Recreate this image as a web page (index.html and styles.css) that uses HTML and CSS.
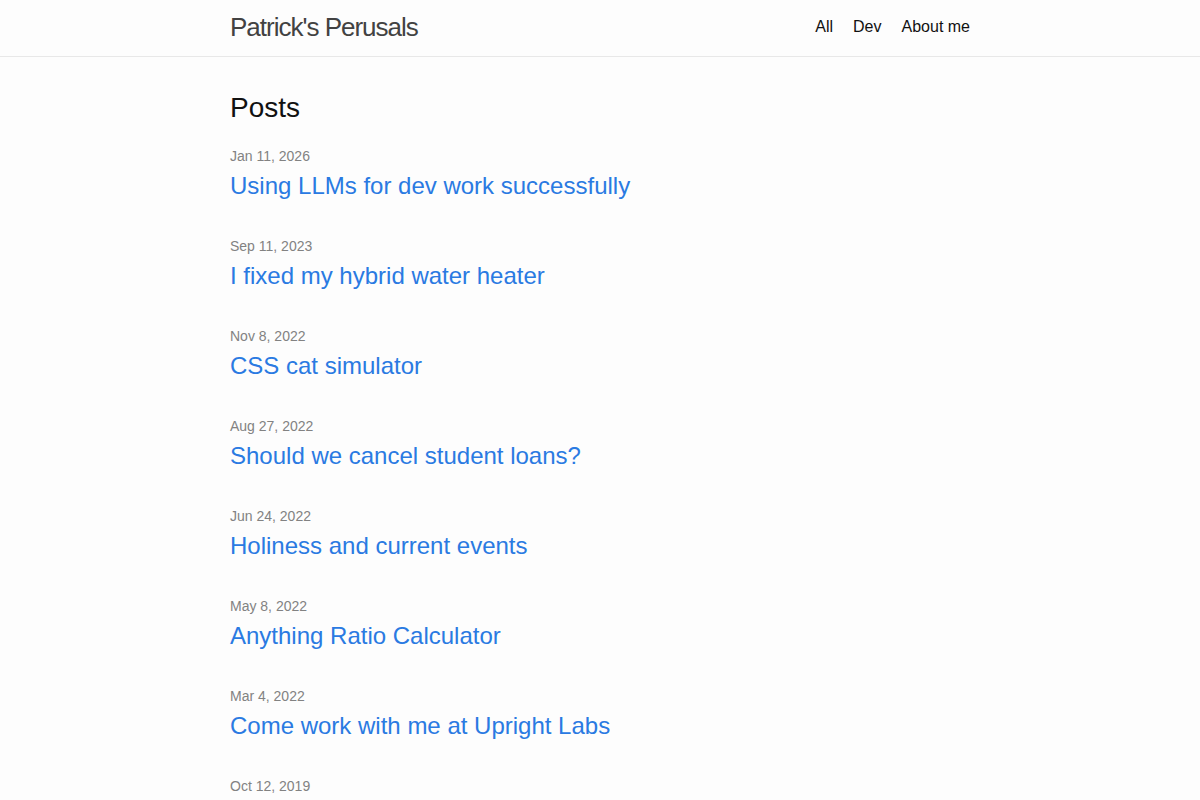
FILE: index.html
```html
<!DOCTYPE html>
<html lang="en">

<head>
     <meta charset="UTF-8">
     <title>Patrick's Perusals</title>
     <meta name="viewport" content="width=device-width, initial-scale=1.0">
     <link rel="stylesheet" href="styles.css">
</head>

<body>

     <header class="site-header">
          <div class="wrapper header-row">
               <a class="site-title" href="#">Patrick's Perusals</a>
               <nav class="site-nav">
                    <a class="page-link" href="#">All</a>
                    <a class="page-link" href="#">Dev</a>
                    <a class="page-link" href="#">About me</a>
               </nav>
          </div>
     </header>

     <main class="page-content">
          <div class="wrapper">
               <h2 class="post-list-heading">Posts</h2>
               <ul class="post-list">
                    <li>
                         <span class="post-meta">Jan 11, 2026</span>
                         <h3><a class="post-link" href="#">Using LLMs for dev work successfully</a></h3>
                    </li>
                    <li>
                         <span class="post-meta">Sep 11, 2023</span>
                         <h3><a class="post-link" href="#">I fixed my hybrid water heater</a></h3>
                    </li>
                    <li>
                         <span class="post-meta">Nov 8, 2022</span>
                         <h3><a class="post-link" href="#">CSS cat simulator</a></h3>
                    </li>
                    <li>
                         <span class="post-meta">Aug 27, 2022</span>
                         <h3><a class="post-link" href="#">Should we cancel student loans?</a></h3>
                    </li>
                    <li>
                         <span class="post-meta">Jun 24, 2022</span>
                         <h3><a class="post-link" href="#">Holiness and current events</a></h3>
                    </li>
                    <li>
                         <span class="post-meta">May 8, 2022</span>
                         <h3><a class="post-link" href="#">Anything Ratio Calculator</a></h3>
                    </li>
                    <li>
                         <span class="post-meta">Mar 4, 2022</span>
                         <h3><a class="post-link" href="#">Come work with me at Upright Labs</a></h3>
                    </li>
                    <li>
                         <span class="post-meta">Oct 12, 2019</span>
                         <h3><a class="post-link" href="#">Notes from the workshop</a></h3>
                    </li>
               </ul>
          </div>
     </main>

</body>

</html>
```

FILE: styles.css
```css
:root {
     --text: #111;
     --grey: #828282;
     --brand: #2a7ae2;
     --border: #e8e8e8;
     --bg: #fdfdfd;
}

* {
     box-sizing: border-box;
     margin: 0;
     padding: 0;
}

body {
     font-family: "Liberation Sans", Arial, sans-serif;
     font-size: 16px;
     line-height: 1.5;
     color: var(--text);
     background-color: var(--bg);
}

a {
     text-decoration: none;
}

.wrapper {
     max-width: 800px;
     margin: 0 auto;
     padding: 0 30px;
}

.site-header {
     border-bottom: 1px solid var(--border);
     min-height: 57px;
}

.header-row {
     display: flex;
     justify-content: space-between;
     align-items: center;
}

.site-title {
     font-size: 26px;
     font-weight: 300;
     line-height: 54px;
     letter-spacing: -1px;
     color: #424242;
}

.site-nav {
     display: flex;
     gap: 20px;
     line-height: 54px;
}

.page-link {
     color: var(--text);
}

.page-content {
     padding: 30px 0;
}

.post-list-heading {
     font-size: 28px;
     font-weight: 400;
     line-height: 42px;
     margin-bottom: 15px;
}

.post-list {
     list-style: none;
}

.post-list li {
     margin-bottom: 30px;
}

.post-meta {
     font-size: 14px;
     color: var(--grey);
}

.post-list h3 {
     font-weight: 400;
     line-height: 36px;
}

.post-link {
     display: block;
     font-size: 24px;
     color: var(--brand);
}
```
